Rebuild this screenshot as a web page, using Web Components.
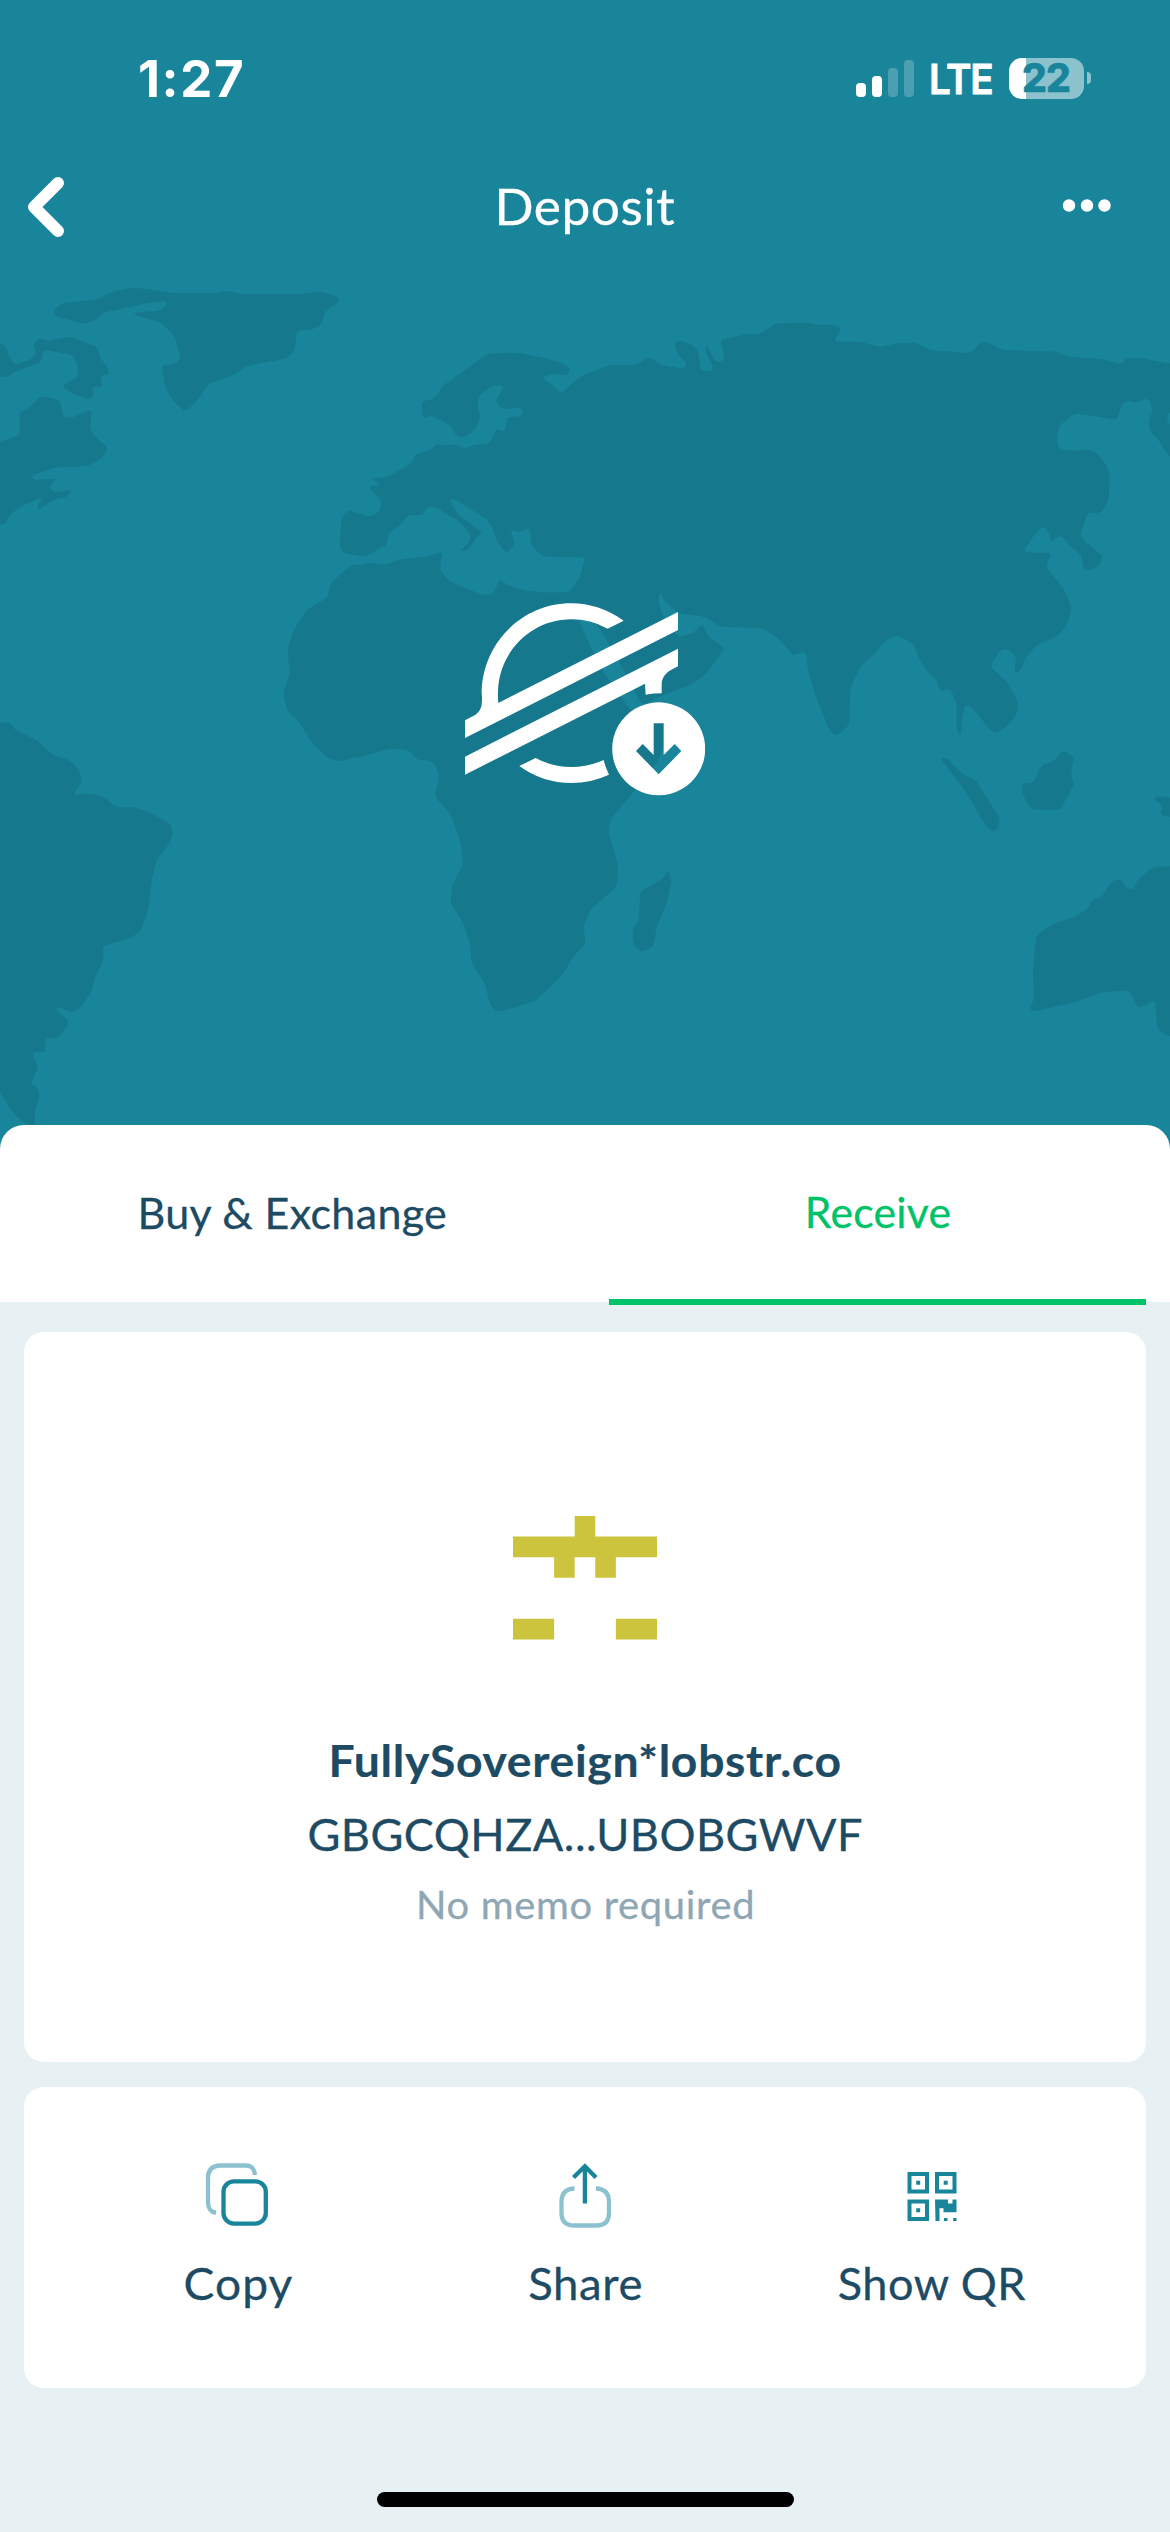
<!DOCTYPE html>
<html lang="en">
<head>
<meta charset="utf-8">
<meta name="viewport" content="width=device-width, initial-scale=1">
<title>Deposit</title>
<style>
  html, body { margin: 0; padding: 0; }
  body { width: 1170px; height: 2532px; overflow: hidden; font-family: Lato, "Open Sans", sans-serif; }
</style>
</head>
<body>
<deposit-screen></deposit-screen>
<script>
class BaseElement extends HTMLElement {
  connectedCallback() {
    if (this.shadowRoot) return;
    this.attachShadow({ mode: "open" }).innerHTML = this.render();
    this.ready();
  }
  render() { return ""; }
  ready() {}
}

/* One line of text widened and tracked so that its ink spans the given width. */
class TrackedText extends BaseElement {
  render() {
    return `<style>:host{display:block;white-space:nowrap;flex:none}span{display:inline-block;-webkit-text-stroke:var(--heft,.3px) currentColor}</style><span><slot></slot></span>`;
  }
  ready() {
    const s = getComputedStyle(this), c = document.createElement("canvas").getContext("2d");
    c.font = `${s.fontWeight} ${s.fontSize} ${s.fontFamily}`;
    const t = this.textContent, m = c.measureText(t);
    const ink = m.actualBoundingBoxRight + m.actualBoundingBoxLeft;
    const target = Number(this.getAttribute("span"));
    const k = this.hasAttribute("rigid") ? 1 : 1 + (target / ink - 1) * 0.6;
    const ls = (target / k - ink) / (t.length - 1);
    const span = this.shadowRoot.querySelector("span");
    span.style.letterSpacing = ls + "px";
    span.style.marginRight = -ls + "px";
    if (k !== 1) {
      span.style.transformOrigin = `calc(50% - ${ls / 2}px) 50%`;
      span.style.transform = `scaleX(${k})`;
    }
  }
}

class StatusBar extends BaseElement {
  render() {
    return `<style>
      :host{display:flex;align-items:center;height:156px;padding:0 79px 0 138px;box-sizing:border-box;color:#fff;font-family:Inter,sans-serif;--heft:0}
      .time{font-size:51px;font-weight:700;flex:1}
      .bars{display:flex;align-items:flex-end;gap:6px;margin-right:13px;height:37px}
      .bars i{width:10px;border-radius:4px;background:#fff}
      .bars i.off{opacity:.22}
      .lte{font-size:41px;font-weight:600;margin:2px 13px 0 0;--heft:.8px}
      .battery{display:flex;align-items:center;justify-content:center;width:75px;height:41px;border-radius:13px;color:#19859a;font-size:39px;font-weight:800;
        background:linear-gradient(90deg,#fff 17px,#8cc2cd 17px);line-height:39px}
      .nub{width:4px;height:12px;margin-left:3px;border-radius:0 5px 5px 0;background:#8cc2cd}
      .battery tracked-text{margin-top:-2px;--heft:.5px}
    </style>
    <tracked-text rigid class="time" span="102">1:27</tracked-text>
    <div class="bars"><i style="height:14px"></i><i style="height:21px"></i><i class="off" style="height:29px"></i><i class="off" style="height:37px"></i></div>
    <tracked-text class="lte" span="60">LTE</tracked-text>
    <div class="battery"><tracked-text rigid span="47">22</tracked-text></div><div class="nub"></div>`;
  }
}

class NavHeader extends BaseElement {
  render() {
    return `<style>
      :host{display:flex;align-items:center;justify-content:space-between;height:100px;color:#fff}
      svg{display:block}
      tracked-text{font-size:50px}
    </style>
    <svg width="150" height="100" fill="none" stroke="#fff" stroke-width="12" stroke-linecap="round" stroke-linejoin="round"><path d="M58 27 34 51l24 24"/></svg>
    <tracked-text span="176">Deposit</tracked-text>
    <svg width="150" height="100" fill="#fff"><circle cx="49" cy="49.5" r="6.2"/><circle cx="67" cy="49.5" r="6.2"/><circle cx="84.5" cy="49.5" r="6.2"/></svg>`;
  }
}

/* Land outlines in thirds of a pixel: [x offset, y offset, points]. */
const LAND = [
  [0, 0, "1240,1385 1245,1362 1290,1352 1310,1330 1330,1338 1370,1333 1395,1348 1420,1335 1470,1330 1490,1285 1515,1298 1522,1250 1560,1250 1572,1235 1560,1222 1510,1228 1485,1205 1512,1158 1480,1155 1438,1185 1432,1220 1442,1250 1425,1290 1395,1310 1372,1312 1350,1275 1290,1245 1268,1258 1265,1205 1305,1195 1325,1160 1465,1060 1550,1058 1640,1075 1700,1095 1712,1110 1700,1128 1670,1120 1625,1130 1685,1180 1740,1130 1830,1095 1910,1095 1945,1070 1985,1095 2050,1106 2062,1090 2030,1060 2022,1025 2045,1022 2080,1035 2098,1060 2100,1112 2135,1115 2140,1100 2115,1050 2118,1030 2145,1085 2170,1085 2172,1060 2160,1020 2230,1005 2285,1000 2325,970 2430,968 2460,976 2500,974 2525,985 2500,1025 2580,1025 2640,1042 2700,1027 2750,1030 2790,1050 2910,1060 2950,1022 3010,1050 3170,1055 3200,1070 3310,1078 3365,1093 3380,1072 3420,1075 3510,1090 3540,1092 3540,1400 3510,1370 3490,1345 3480,1325 3450,1295 3445,1260 3458,1235 3450,1200 3430,1195 3410,1210 3375,1200 3362,1225 3350,1260 3280,1248 3225,1240 3180,1275 3170,1310 3175,1345 3200,1352 3280,1350 3300,1370 3325,1405 3330,1440 3325,1500 3305,1538 3260,1540 3250,1580 3240,1600 3250,1620 3310,1670 3295,1700 3270,1712 3250,1705 3245,1665 3205,1635 3190,1610 3170,1608 3155,1628 3140,1582 3125,1582 3110,1595 3072,1650 3080,1658 3155,1658 3138,1700 3190,1765 3214,1820 3205,1870 3170,1910 3110,1935 3080,1970 3055,2018 3045,2010 3050,1970 3020,1945 3000,1950 2970,2000 3020,2045 3055,2105 3050,2145 3020,2180 2990,2200 2970,2190 2915,2120 2895,2115 2885,2160 2882,2208 2870,2190 2870,2110 2850,2065 2820,2075 2810,2040 2780,2015 2755,1970 2740,1930 2700,1910 2680,1908 2650,1930 2620,1965 2580,2000 2550,2070 2548,2175 2510,2208 2490,2195 2440,2070 2420,1990 2420,1960 2405,1955 2380,1968 2340,1920 2290,1885 2160,1880 2115,1850 2035,1840 2000,1810 1978,1775 1975,1810 1995,1860 2035,1910 2080,1900 2105,1870 2125,1910 2175,1945 2120,2020 2080,2050 1980,2090 1930,2115 1915,2095 1860,1990 1790,1870 1730,1850 1800,2000 1890,2130 1920,2150 2005,2135 1998,2220 1970,2290 1905,2370 1830,2460 1825,2500 1850,2580 1855,2610 1850,2660 1770,2730 1750,2780 1758,2830 1720,2870 1690,2920 1610,3000 1540,3025 1490,3035 1470,3015 1455,2950 1415,2890 1410,2830 1390,2770 1352,2710 1355,2660 1390,2590 1380,2520 1350,2440 1305,2390 1318,2330 1305,2290 1285,2280 1255,2282 1225,2250 1170,2245 1090,2270 1050,2275 1020,2285 985,2275 940,2235 900,2170 860,2130 850,2080 870,2020 862,1950 880,1890 920,1830 985,1790 990,1750 1060,1690 1080,1698 1105,1688 1155,1695 1200,1678 1290,1668 1328,1655 1320,1700 1325,1720 1360,1750 1450,1785 1480,1782 1500,1735 1520,1755 1580,1772 1650,1778 1710,1775 1740,1730 1755,1672 1630,1670 1595,1640 1590,1582 1560,1598 1530,1590 1545,1630 1520,1662 1500,1640 1465,1560 1400,1520 1360,1495 1348,1500 1370,1540 1450,1600 1430,1610 1405,1650 1380,1655 1412,1620 1410,1600 1380,1565 1320,1530 1305,1520 1280,1520 1270,1545 1225,1545 1200,1575 1165,1600 1160,1635 1095,1670 1030,1660 1018,1640 1025,1550 1045,1530 1110,1550 1140,1535 1145,1505 1105,1458 1145,1455 1112,1436 1160,1430 1200,1410"],
  [0, 780, "160,155 180,130 295,118 330,97 400,82 530,100 640,100 690,92 720,102 900,102 960,95 1010,108 1020,122 975,155 965,195 940,208 890,212 885,270 860,295 740,318 700,345 625,372 590,425 557,455 520,425 495,380 485,315 525,312 542,295 525,230 480,185 410,168 400,158 480,152 500,138 498,122 430,132 310,158 290,180 245,192 220,182 170,172"],
  [0, 780, "-30,250 15,253 25,285 45,315 95,298 110,275 98,255 120,232 140,243 210,230 295,262 298,290 325,325 328,345 300,345 308,385 275,378 283,412 265,418 220,402 185,378 232,352 235,320 218,285 130,268 125,305 45,335 15,355 -30,330"],
  [0, 780, "-30,555 60,525 58,455 85,445 120,408 180,420 190,470 210,475 275,448 270,510 300,545 325,560 310,590 265,618 170,622 95,645 100,660 170,655 145,685 165,697 218,690 200,712 160,718 115,752 112,735 130,710 60,740 25,770 18,795 -30,790"],
  [0, 2040, "-30,130 32,127 45,150 110,180 165,230 200,235 232,262 247,300 220,347 265,340 310,350 350,382 405,382 450,398 515,435 518,465 505,495 470,540 455,600 445,690 420,755 390,775 308,798 312,840 285,890 275,935 240,985 215,998 170,980 172,995 208,1022 195,1050 170,1078 135,1072 138,1115 95,1118 115,1160 90,1215 112,1218 120,1250 105,1290 105,1345 60,1320 25,1280 0,1235 -30,1100"],
  [1200, 1740, "720,935 790,895 805,868 815,900 800,970 770,1040 760,1100 730,1115 708,1108 697,1080 700,1040 718,1020"],
  [2310, 1980, "510,292 535,298 580,345 615,358 690,475 685,505 668,517 645,495 590,400"],
  [2310, 1980, "755,368 790,370 815,315 850,305 880,270 912,290 903,340 912,375 870,450 785,448 760,410"],
  [2310, 1980, "1148,412 1190,408 1230,430 1230,475 1170,465 1180,440"],
  [2310, 1980, "735,0 768,0 745,38 735,36"],
  [2310, 1980, "800,825 850,792 915,770 955,745 970,712 990,718 1025,665 1048,655 1070,685 1092,690 1100,662 1150,620 1230,618 1230,1130 1190,1128 1162,1105 1155,1020 1105,1045 1075,990 990,998 910,1028 785,1055 780,1040 792,1020 788,930"]
];
const EURASIA_LAKE = "3510,1170 3500,1250 3505,1270 3515,1275 3540,1260 3540,1170".replace("3510,1170", "3510,1235").replace("3540,1170", "3540,1230");

function softOutline([ox, oy, str]) {
  const p = str.split(" ").map(s => { const [x, y] = s.split(",").map(Number); return [x + ox, y + oy]; });
  const n = p.length, R = 13;
  const toward = (a, b) => {
    const dx = b[0] - a[0], dy = b[1] - a[1], l = Math.hypot(dx, dy) || 1, k = Math.min(R, l / 2) / l;
    return (a[0] + dx * k).toFixed(1) + " " + (a[1] + dy * k).toFixed(1);
  };
  return p.map((a, i) => `${i ? "L" : "M"}${toward(a, p[(i + n - 1) % n])}Q${a[0]} ${a[1]} ${toward(a, p[(i + 1) % n])}`).join("") + "Z";
}

class WorldMap extends BaseElement {
  render() {
    return `<style>:host{display:block}svg{display:block}</style>
    <svg width="1170" height="1170" viewBox="0 0 3510 3510">
      <path fill="#16788c" d="${LAND.map(softOutline).join("")}"/>
      <path fill="#19859a" d="${softOutline([0, 0, EURASIA_LAKE])}"/>
    </svg>`;
  }
}

class StellarDeposit extends BaseElement {
  render() {
    return `<style>:host{display:block}svg{display:block}</style>
    <svg width="240" height="193" viewBox="195 68 720 579" fill="#fff">
      <path d="M671 121C622 86 568 69 514 69C365 69 246 190 245 339Q247 352 245 372C243 390 231 402 218 408L195 420V473L834 149V95L295 368Q293 350 294 330C299 212 395 117 514 117Q572 117 623 145Z"/>
      <path d="M195 529V583L735 310L737 343Q760 339 785 339V312C785 292 799 275 817 267L834 258V205Z"/>
      <path d="M358 557L407 533Q456 560 514 560Q564 560 611 539Q616 561 627 583Q573 608 514 608Q428 608 358 557Z"/>
      <path fill-rule="evenodd" d="M776 366a139.500 139.500 0 1 0 .1 0ZM761 429H791V524L824 491L844 512L776 582L708 512L728 491L761 524Z"/>
    </svg>`;
  }
}

class HeroBanner extends BaseElement {
  render() {
    return `<style>
      :host{display:grid;height:1170px;background:#19859a}
      world-map,.front{grid-area:1/1}
      .front{display:flex;flex-direction:column}
      stellar-deposit{margin:347px 0 0 465px}
    </style>
    <world-map></world-map>
    <div class="front"><status-bar></status-bar><nav-header></nav-header><stellar-deposit></stellar-deposit></div>`;
  }
}

class TabStrip extends BaseElement {
  render() {
    return `<style>
      :host{display:flex;height:180px;padding:0 24px 0 24px;box-sizing:border-box;border-radius:24px 24px 0 0;font-size:42px;
        background:linear-gradient(#fff 177px,transparent 177px)}
      div{flex:1;display:flex;align-items:center;justify-content:center;box-sizing:border-box;padding-bottom:5px;color:#1e4b64}
      .first{padding-right:48px}
      .on{flex:0 0 537px;color:#00c268;border-bottom:6px solid #00c268;padding-bottom:0}
    </style>
    <div class="first"><tracked-text span="306">Buy &amp; Exchange</tracked-text></div>
    <div class="on"><tracked-text span="142">Receive</tracked-text></div>`;
  }
}

class IdentIcon extends BaseElement {
  render() {
    const cells = ["...#...", "#######", "..#.#..", ".......", ".......", "##...##", "......."];
    let d = "";
    cells.forEach((row, y) => row.replace(/#+/g, (m, x) => { d += `M${x} ${y}h${m.length}v1h-${m.length}z`; }));
    return `<style>:host{display:block}svg{display:block}</style>
      <svg width="144" height="144" viewBox="0 0 7 7"><path fill="#cbc43c" d="${d}"/></svg>`;
  }
}

class AccountCard extends BaseElement {
  render() {
    return `<style>
      :host{display:flex;flex-direction:column;align-items:center;height:730px;box-sizing:border-box;padding-top:184px;background:#fff;border-radius:20px;color:#1e4b64}
      .name{font-size:44px;font-weight:700;line-height:74px;margin-top:63px;--heft:.2px}
      .key{font-size:44px;line-height:74px}
      .memo{font-size:38px;line-height:66px;color:#8fa7b4}
    </style>
    <ident-icon></ident-icon>
    <tracked-text class="name" span="508">FullySovereign*lobstr.co</tracked-text>
    <tracked-text class="key" span="552">GBGCQHZA...UBOBGWVF</tracked-text>
    <tracked-text class="memo" span="333">No memo required</tracked-text>`;
  }
}

class ActionButton extends BaseElement {
  render() {
    const icons = {
      copy: `<svg width="72" height="72" viewBox="202 2160 72 72" fill="none" stroke-width="4.300"><path stroke="#8cc2cf" d="M254.800 2175C254.800 2169 251 2165.500 246 2165.500H220Q208 2166 208 2178V2202C208 2208 211 2212.500 216 2212.500"/><rect x="223.500" y="2181.300" width="42.300" height="42.300" rx="10.500" stroke="#19859a"/></svg>`,
      share: `<svg width="72" height="72" viewBox="549.500 2160 72 72" fill="none" stroke-width="4.300"><path stroke="#8cc2cf" d="M575 2188.500Q562 2189 562 2202V2213Q562 2225.500 575 2225.500H597Q609.500 2225.500 609.500 2213V2202Q609.500 2189 596.500 2188.500"/><path stroke="#19859a" d="M585.400 2203.500V2167M574 2177.500 585.400 2166.200 596.500 2177.500"/></svg>`,
      qr: `<svg width="72" height="72" viewBox="896.500 2160 72 72" fill="#19859a"><defs><path id="f" fill-rule="evenodd" d="M0 0h21.500v21.500H0zM4 4v13.500h13.500V4zM8.700 8.700h4v4h-4z"/></defs>
        <use href="#f" x="908" y="2172"/><use href="#f" x="935.500" y="2172"/><use href="#f" x="908" y="2199.500"/>
        <path d="M935.500 2199.500h13v4h4.500v-4h4v12.700h-13v-4h-4v12.800h-4zM944.500 2218h3.500v3h-3.500zM953.700 2218h3.300v3h-3.300z"/></svg>`
    };
    return `<style>
      :host{display:flex;flex-direction:column;align-items:center;width:347px;font-size:44px;color:#1e4b64}
      svg{display:block;margin-bottom:20px}.t{line-height:62px}
    </style>${icons[this.getAttribute("icon")]}<tracked-text class="t" span="${this.getAttribute("span")}">${this.getAttribute("label")}</tracked-text>`;
  }
}

class DepositScreen extends BaseElement {
  render() {
    return `<style>
      :host{display:flex;flex-direction:column;width:1170px;height:2532px;background:#e7f0f3;overflow:hidden}
      hero-banner,tab-strip{flex:none}
      tab-strip{margin-top:-45px}
      .content{display:flex;flex-direction:column;gap:25px;padding:27px 24px 0}
      .panel{display:flex;justify-content:center;height:301px;box-sizing:border-box;padding:73px 0 0;background:#fff;border-radius:20px}
      .home{width:417px;height:15px;border-radius:8px;background:#000;margin:104px auto 0}
    </style>
    <hero-banner></hero-banner>
    <tab-strip></tab-strip>
    <div class="content">
      <account-card></account-card>
      <div class="panel">
        <action-button icon="copy" label="Copy" span="107"></action-button>
        <action-button icon="share" label="Share" span="112"></action-button>
        <action-button icon="qr" label="Show QR" span="188"></action-button>
      </div>
    </div>
    <div class="home"></div>`;
  }
}

customElements.define("tracked-text", TrackedText);
customElements.define("status-bar", StatusBar);
customElements.define("nav-header", NavHeader);
customElements.define("world-map", WorldMap);
customElements.define("stellar-deposit", StellarDeposit);
customElements.define("hero-banner", HeroBanner);
customElements.define("tab-strip", TabStrip);
customElements.define("ident-icon", IdentIcon);
customElements.define("account-card", AccountCard);
customElements.define("action-button", ActionButton);
customElements.define("deposit-screen", DepositScreen);
</script>
</body>
</html>
